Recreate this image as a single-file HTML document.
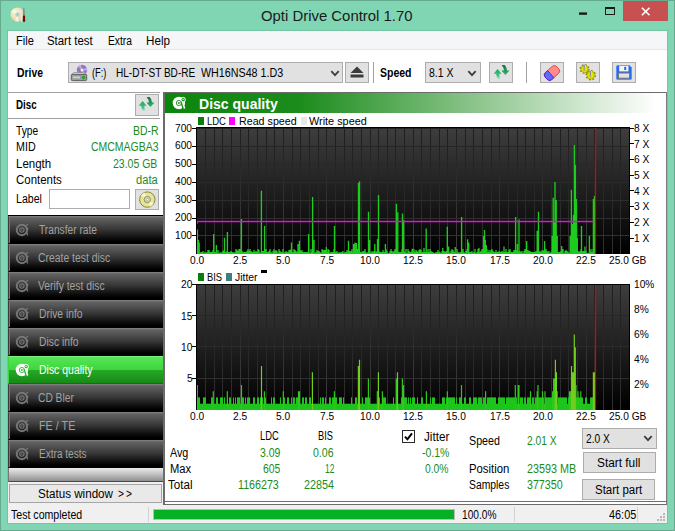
<!DOCTYPE html>
<html><head><meta charset="utf-8"><title>Opti Drive Control 1.70</title>
<style>
html,body{margin:0;padding:0;}
body{width:675px;height:531px;overflow:hidden;background:#80D5B3;position:relative;font-family:"Liberation Sans",sans-serif;font-size:12px;color:#000;}
.abs{position:absolute;}
div{position:absolute;box-sizing:border-box;white-space:nowrap;}
.t{font-family:"Liberation Sans",sans-serif;height:16px;}
.tick{width:4px;height:1px;background:#000;}
.btn{background:#e1e1e1;border:1px solid #adadad;}
.sb{left:8px;width:155px;height:28px;box-shadow:inset 1px 0 0 #777;background:linear-gradient(#6c6c6c 0%,#5e5e5e 8%,#363636 48%,#0e0e0e 80%,#000 94%);border-top:1px solid #7c7c7c;border-left:1px solid #3c3c3c;border-bottom:1px solid #000;}
.sb .ico{position:absolute;left:6px;top:5px;}
.sb.act{box-shadow:none;background:linear-gradient(#56e656 0%,#3ed63e 48%,#25a825 52%,#168a16 100%);border-top:1px solid #7cf07c;border-left:1px solid #3ed63e;border-bottom:1px solid #0f6f0f;}
</style></head><body>
<div style="left:0;top:0;width:675px;height:531px;border:1px solid #66aa8f;"></div>
<div style="left:7px;top:30px;width:661px;height:494px;border:1px solid #73c5a3;"></div>

<div class="t" style="left:261.2px;top:7.6px;font-size:15px;line-height:16px;color:#1a1a1a;transform-origin:0 50%;transform:scaleX(0.9931);">Opti Drive Control 1.70</div>
<svg class="abs" style="left:9px;top:6px" width="20" height="20" viewBox="0 0 20 20"><defs><radialGradient id="dg" cx="0.4" cy="0.35" r="0.75"><stop offset="0" stop-color="#fbf6dc"/><stop offset="0.6" stop-color="#ecdfae"/><stop offset="1" stop-color="#cdbf8c"/></radialGradient></defs><circle cx="8.5" cy="8.6" r="7" fill="url(#dg)"/><path d="M8.5 8.6L2 5.5A7 7 0 0 1 5 2.6zM8.5 8.6L10 15.4A7 7 0 0 1 6 15.2z" fill="#fffbe8" opacity="0.7"/><circle cx="8.5" cy="8.6" r="2.3" fill="#c9cdd2"/><circle cx="8.5" cy="8.6" r="1.1" fill="#80D5B3"/><path d="M10.8 3.2l1.6-.6.9 13-1.4.4z" fill="#ececec" stroke="#c8c8c8" stroke-width="0.3"/><path d="M14.6 2.2l.6 0 .3 7.2h-1.2z" fill="#5a5a5a"/><path d="M14 9.4h2l.2 6-1.2.6-1.2-.6z" fill="#6a0c0c"/></svg>
<svg class="abs" style="left:578px;top:10px" width="10" height="6" viewBox="0 0 10 6"><rect x="1" y="2.4" width="8" height="2.4" fill="#1b1b1b"/></svg>
<div style="left:605px;top:7px;width:10px;height:8px;border:1px solid #1b1b1b;border-top-width:2px;"></div>
<div style="left:623px;top:1px;width:45px;height:20px;background:#c75050;"></div>
<svg class="abs" style="left:640px;top:6px" width="11" height="11" viewBox="0 0 11 11"><path d="M1.9 1.7l7.6 7.6M9.5 1.7l-7.6 7.6" stroke="#fff" stroke-width="1.6"/></svg>
<div style="left:8px;top:31px;width:659px;height:492px;background:#f0f0f0;"></div>
<div style="left:8px;top:31px;width:659px;height:19px;background:#f5f6f7;border-bottom:1px solid #e6e7e8;"></div>
<div style="left:8px;top:50px;width:659px;height:42px;background:#fff;"></div>

<div class="t" style="left:15.5px;top:33.0px;font-size:12px;line-height:16px;color:#000;transform-origin:0 50%;transform:scaleX(0.9213);">File</div>
<div class="t" style="left:47.2px;top:33.0px;font-size:12px;line-height:16px;color:#000;transform-origin:0 50%;transform:scaleX(0.9500);">Start test</div>
<div class="t" style="left:107.5px;top:33.0px;font-size:12px;line-height:16px;color:#000;transform-origin:0 50%;transform:scaleX(0.8547);">Extra</div>
<div class="t" style="left:146.1px;top:33.0px;font-size:12px;line-height:16px;color:#000;transform-origin:0 50%;transform:scaleX(0.9709);">Help</div>
<div class="t" style="left:16.8px;top:65.1px;font-size:12px;line-height:16px;color:#000;transform-origin:0 50%;transform:scaleX(0.8633);font-weight:bold;">Drive</div>
<div class="btn" style="left:68px;top:62px;width:275px;height:21px;"></div>
<svg class="abs" style="left:70px;top:63px" width="19" height="19" viewBox="0 0 19 19"><circle cx="12" cy="7" r="5.2" fill="#9377c2"/><path d="M12 7L8.2 3.6A5.2 5.2 0 0 1 11 1.9zM12 7l3.8 3.4A5.2 5.2 0 0 1 13 12.1zM12 7l4.6-2.2a5.2 5.2 0 0 1 .6 2.6z" fill="#c4b2e2"/><circle cx="12" cy="7" r="1.5" fill="#f2eef8"/><path d="M1.5 11.5l2.5-2h9l3.5 2z" fill="#d4d6d8" stroke="#777" stroke-width="0.6"/><rect x="1.3" y="11.4" width="15.4" height="6.2" rx="1" fill="#9c9fa2" stroke="#5c5f62" stroke-width="1"/><rect x="3" y="13.6" width="7" height="1.6" fill="#d0d2d4"/><circle cx="13.6" cy="14.6" r="1.4" fill="#1fc01f" stroke="#0d7a0d" stroke-width="0.5"/></svg>
<div class="t" style="left:91.5px;top:65.1px;font-size:12px;line-height:16px;color:#000;transform-origin:0 50%;transform:scaleX(0.7742);">(F:)</div>
<div class="t" style="left:115.5px;top:65.1px;font-size:12px;line-height:16px;color:#000;transform-origin:0 50%;transform:scaleX(0.8386);">HL-DT-ST BD-RE</div>
<div class="t" style="left:201.3px;top:65.1px;font-size:12px;line-height:16px;color:#000;transform-origin:0 50%;transform:scaleX(0.8931);">WH16NS48 1.D3</div>
<svg class="abs" style="left:329.7px;top:70px" width="10" height="7" viewBox="0 0 9.4 7"><path d="M1 1.2l3.7 3.9 3.7-3.9" stroke="#404040" stroke-width="1.9" fill="none"/></svg>
<div class="btn" style="left:345px;top:62px;width:24px;height:21px;"></div>
<svg class="abs" style="left:349px;top:65px" width="16" height="15" viewBox="0 0 16 15"><path d="M8 1.5l6.5 6.5H1.5z" fill="#3c3c3c"/><rect x="1.5" y="9.5" width="13" height="3" fill="#3c3c3c"/></svg>
<div style="left:373px;top:62px;width:1px;height:21px;background:#a0a0a0;"></div>
<div class="t" style="left:379.9px;top:65.1px;font-size:12px;line-height:16px;color:#000;transform-origin:0 50%;transform:scaleX(0.8750);font-weight:bold;">Speed</div>
<div class="btn" style="left:425px;top:62px;width:56px;height:21px;"></div>
<div class="t" style="left:429.0px;top:65.1px;font-size:12px;line-height:16px;color:#000;transform-origin:0 50%;transform:scaleX(0.8727);">8.1 X</div>
<svg class="abs" style="left:466.7px;top:69.6px" width="10" height="7" viewBox="0 0 9.4 7"><path d="M1 1.2l3.7 3.9 3.7-3.9" stroke="#404040" stroke-width="1.9" fill="none"/></svg>
<div class="btn" style="left:489px;top:62px;width:24px;height:21px;"></div>
<svg class="abs" style="left:492.5px;top:64px" width="17" height="17" viewBox="0 0 17 17"><defs><linearGradient id="ra" x1="0" y1="0" x2="0" y2="1"><stop offset="0" stop-color="#23a862"/><stop offset="0.6" stop-color="#3cc27c"/><stop offset="1" stop-color="#c8eed8"/></linearGradient><linearGradient id="rb" x1="0" y1="0" x2="0" y2="1"><stop offset="0" stop-color="#176f43"/><stop offset="0.5" stop-color="#1f9358"/><stop offset="1" stop-color="#2fb86c"/></linearGradient></defs><path d="M4.6 5.1L0.6 9.7H3.2Q3.2 13.5 5.2 15.6Q7 15.2 7.2 14.8Q6.2 12.5 6.3 9.7H8.6z" fill="url(#ra)"/><path d="M12.4 11.1L8.4 6.6H10.9Q10.9 3.4 8.6 1.2Q10 0.8 11.6 1Q14 3 14 6.6H16.4z" fill="url(#rb)"/></svg>
<div style="left:526px;top:62px;width:1px;height:21px;background:#a0a0a0;"></div>
<div class="btn" style="left:540px;top:62px;width:24px;height:21px;"></div>
<svg class="abs" style="left:543px;top:64px" width="18" height="18" viewBox="0 0 18 18"><g transform="rotate(-42 9 9)"><rect x="1.2" y="4.3" width="15.6" height="9.4" rx="3.2" fill="#ff8c8c" stroke="#e24040" stroke-width="0.9"/><path d="M4.4 4.3a3.2 3.2 0 0 0 -3.2 3.2v3a3.2 3.2 0 0 0 3.2 3.2h2.9V4.3z" fill="#6868ff" stroke="#2e2ee0" stroke-width="0.9"/></g></svg>
<div class="btn" style="left:576px;top:62px;width:24px;height:21px;"></div>
<svg class="abs" style="left:579px;top:63px" width="18" height="18" viewBox="0 0 18 18"><g><circle cx="5.6" cy="6" r="4.1" fill="none" stroke="#8c8c00" stroke-width="1.8" stroke-dasharray="1.7 1.5"/><circle cx="5.6" cy="6" r="3.6" fill="#e2e200" stroke="#9a9a00" stroke-width="0.6"/><circle cx="11.8" cy="12.2" r="4.4" fill="none" stroke="#8c8c00" stroke-width="1.8" stroke-dasharray="1.8 1.6"/><circle cx="11.8" cy="12.2" r="3.9" fill="#e2e200" stroke="#9a9a00" stroke-width="0.6"/><rect x="4.6" y="1.6" width="2.2" height="5.8" fill="#8a8a8a"/><rect x="5.8" y="1.6" width="0.9" height="5.8" fill="#e8e8e8"/><rect x="10.8" y="8" width="2" height="5.8" fill="#8a8a8a"/><rect x="11.9" y="8" width="0.8" height="5.8" fill="#e8e8e8"/></g></svg>
<div class="btn" style="left:612px;top:62px;width:24px;height:21px;"></div>
<svg class="abs" style="left:616px;top:65px" width="16" height="15" viewBox="0 0 16 15"><path d="M1.5 0.5h12l2 2v11a1 1 0 0 1 -1 1h-13a1 1 0 0 1 -1 -1v-12a1 1 0 0 1 1 -1z" fill="#2a68f0" stroke="#5b93ff" stroke-width="1"/><rect x="3.2" y="0.8" width="9.3" height="5.6" fill="#f4f4f4"/><rect x="8.2" y="1.8" width="2" height="3.2" fill="#2a68f0"/><rect x="2.5" y="8" width="11" height="5.2" fill="#e2e2e2" stroke="#777" stroke-width="1"/></svg>
<div style="left:8px;top:92px;width:155px;height:124px;background:#fff;"></div><div style="left:8px;top:92px;width:152px;height:1px;background:#a0a0a0;"></div>
<div style="left:8px;top:118px;width:152px;height:1px;background:#a0a0a0;"></div>
<div class="btn" style="left:135px;top:94px;width:24px;height:22px;"></div>
<svg class="abs" style="left:138px;top:96px" width="17" height="17" viewBox="0 0 17 17"><defs><linearGradient id="ra" x1="0" y1="0" x2="0" y2="1"><stop offset="0" stop-color="#23a862"/><stop offset="0.6" stop-color="#3cc27c"/><stop offset="1" stop-color="#c8eed8"/></linearGradient><linearGradient id="rb" x1="0" y1="0" x2="0" y2="1"><stop offset="0" stop-color="#176f43"/><stop offset="0.5" stop-color="#1f9358"/><stop offset="1" stop-color="#2fb86c"/></linearGradient></defs><path d="M4.6 5.1L0.6 9.7H3.2Q3.2 13.5 5.2 15.6Q7 15.2 7.2 14.8Q6.2 12.5 6.3 9.7H8.6z" fill="url(#ra)"/><path d="M12.4 11.1L8.4 6.6H10.9Q10.9 3.4 8.6 1.2Q10 0.8 11.6 1Q14 3 14 6.6H16.4z" fill="url(#rb)"/></svg>
<div class="t" style="left:16.4px;top:96.8px;font-size:12px;line-height:16px;color:#000;transform-origin:0 50%;transform:scaleX(0.8136);font-weight:bold;">Disc</div>
<div class="t" style="left:16.4px;top:122.8px;font-size:12px;line-height:16px;color:#000;transform-origin:0 50%;transform:scaleX(0.8487);">Type</div>
<div class="t" style="left:132.7px;top:122.8px;font-size:12px;line-height:16px;color:#1c8a1c;transform-origin:0 50%;transform:scaleX(0.8709);">BD-R</div>
<div class="t" style="left:16.4px;top:138.8px;font-size:12px;line-height:16px;color:#000;transform-origin:0 50%;transform:scaleX(0.8925);">MID</div>
<div class="t" style="left:90.7px;top:138.8px;font-size:12px;line-height:16px;color:#1c8a1c;transform-origin:0 50%;transform:scaleX(0.8721);">CMCMAGBA3</div>
<div class="t" style="left:16.4px;top:155.8px;font-size:12px;line-height:16px;color:#000;transform-origin:0 50%;transform:scaleX(0.9586);">Length</div>
<div class="t" style="left:113.4px;top:155.8px;font-size:12px;line-height:16px;color:#1c8a1c;transform-origin:0 50%;transform:scaleX(0.8748);">23.05 GB</div>
<div class="t" style="left:16.4px;top:171.8px;font-size:12px;line-height:16px;color:#000;transform-origin:0 50%;transform:scaleX(0.9542);">Contents</div>
<div class="t" style="left:136.0px;top:171.8px;font-size:12px;line-height:16px;color:#1c8a1c;transform-origin:0 50%;transform:scaleX(0.9274);">data</div>
<div class="t" style="left:16.4px;top:190.8px;font-size:12px;line-height:16px;color:#000;transform-origin:0 50%;transform:scaleX(0.8810);">Label</div>
<div style="left:49px;top:189px;width:81px;height:20px;background:#fff;border:1px solid #abadb3;"></div>
<div class="btn" style="left:135px;top:189px;width:24px;height:21px;"></div>
<svg class="abs" style="left:138.5px;top:191px" width="17" height="17" viewBox="0 0 17 17"><circle cx="8.3" cy="8.6" r="7.7" fill="#e6e68c" stroke="#77773c" stroke-width="0.9"/><path d="M8.3 8.6L2 4.6A7.7 7.7 0 0 1 5.5 1.6zM8.3 8.6l6.3 4A7.7 7.7 0 0 1 11 15.7z" fill="#f6f6c8"/><circle cx="8.3" cy="8.6" r="3.2" fill="#d8d8b0" stroke="#8a8a6a" stroke-width="0.9"/><circle cx="8.3" cy="8.6" r="1.3" fill="#f4f4f4" stroke="#8a8a6a" stroke-width="0.5"/></svg>
<div style="left:8px;top:215px;width:156px;height:267px;background:#000;"></div>
<div class="sb" style="top:216px"><svg class="ico" width="16" height="16" viewBox="0 0 16 16"><circle cx="6.9" cy="8" r="5.2" fill="none" stroke="#787878" stroke-width="1.9"/><circle cx="6.9" cy="8" r="2.2" fill="none" stroke="#787878" stroke-width="1.1"/><circle cx="6.9" cy="8" r="0.7" fill="#787878"/><path d="M10 4.5l3-2.3M10.8 7l2.6-.6M11.8 9.5l.8 4" stroke="#787878" stroke-width="1.2" fill="none"/></svg></div>
<div class="t" style="left:39.0px;top:221.8px;font-size:12px;line-height:16px;color:#a2a2a2;transform-origin:0 50%;transform:scaleX(0.8494);">Transfer rate</div>
<div class="sb" style="top:244px"><svg class="ico" width="16" height="16" viewBox="0 0 16 16"><circle cx="6.9" cy="8" r="5.2" fill="none" stroke="#787878" stroke-width="1.9"/><circle cx="6.9" cy="8" r="2.2" fill="none" stroke="#787878" stroke-width="1.1"/><circle cx="6.9" cy="8" r="0.7" fill="#787878"/><path d="M10 4.5l3-2.3M10.8 7l2.6-.6M11.8 9.5l.8 4" stroke="#787878" stroke-width="1.2" fill="none"/></svg></div>
<div class="t" style="left:37.8px;top:249.8px;font-size:12px;line-height:16px;color:#a2a2a2;transform-origin:0 50%;transform:scaleX(0.8657);">Create test disc</div>
<div class="sb" style="top:272px"><svg class="ico" width="16" height="16" viewBox="0 0 16 16"><circle cx="6.9" cy="8" r="5.2" fill="none" stroke="#787878" stroke-width="1.9"/><circle cx="6.9" cy="8" r="2.2" fill="none" stroke="#787878" stroke-width="1.1"/><circle cx="6.9" cy="8" r="0.7" fill="#787878"/><path d="M10 4.5l3-2.3M10.8 7l2.6-.6M11.8 9.5l.8 4" stroke="#787878" stroke-width="1.2" fill="none"/></svg></div>
<div class="t" style="left:38.3px;top:277.8px;font-size:12px;line-height:16px;color:#a2a2a2;transform-origin:0 50%;transform:scaleX(0.8618);">Verify test disc</div>
<div class="sb" style="top:300px"><svg class="ico" width="16" height="16" viewBox="0 0 16 16"><circle cx="6.9" cy="8" r="5.2" fill="none" stroke="#787878" stroke-width="1.9"/><circle cx="6.9" cy="8" r="2.2" fill="none" stroke="#787878" stroke-width="1.1"/><circle cx="6.9" cy="8" r="0.7" fill="#787878"/><path d="M10 4.5l3-2.3M10.8 7l2.6-.6M11.8 9.5l.8 4" stroke="#787878" stroke-width="1.2" fill="none"/></svg></div>
<div class="t" style="left:38.5px;top:305.8px;font-size:12px;line-height:16px;color:#a2a2a2;transform-origin:0 50%;transform:scaleX(0.8590);">Drive info</div>
<div class="sb" style="top:328px"><svg class="ico" width="16" height="16" viewBox="0 0 16 16"><circle cx="6.9" cy="8" r="5.2" fill="none" stroke="#787878" stroke-width="1.9"/><circle cx="6.9" cy="8" r="2.2" fill="none" stroke="#787878" stroke-width="1.1"/><circle cx="6.9" cy="8" r="0.7" fill="#787878"/><path d="M10 4.5l3-2.3M10.8 7l2.6-.6M11.8 9.5l.8 4" stroke="#787878" stroke-width="1.2" fill="none"/></svg></div>
<div class="t" style="left:38.5px;top:333.8px;font-size:12px;line-height:16px;color:#a2a2a2;transform-origin:0 50%;transform:scaleX(0.8594);">Disc info</div>
<div class="sb act" style="top:356px"><svg class="ico" width="16" height="16" viewBox="0 0 16 16"><circle cx="6.9" cy="8" r="6.2" fill="#fff"/><circle cx="6.9" cy="8" r="2.6" fill="none" stroke="#2db82d" stroke-width="0.9"/><circle cx="6.9" cy="8" r="0.9" fill="#2db82d"/><path d="M9.6 6.4l2.3 8" stroke="#2db82d" stroke-width="2.6"/><circle cx="11.2" cy="4.6" r="2.2" fill="#2db82d" stroke="#fff" stroke-width="1"/><path d="M10.4 6.6l2.2 6.9" stroke="#fff" stroke-width="1.5"/><path d="M10.3 4.9l.7-1 .5 1 .6-1" stroke="#fff" stroke-width="0.6" fill="none"/></svg></div>
<div class="t" style="left:38.5px;top:361.8px;font-size:12px;line-height:16px;color:#fff;transform-origin:0 50%;transform:scaleX(0.8725);">Disc quality</div>
<div class="sb" style="top:384px"><svg class="ico" width="16" height="16" viewBox="0 0 16 16"><circle cx="6.9" cy="8" r="5.2" fill="none" stroke="#787878" stroke-width="1.9"/><circle cx="6.9" cy="8" r="2.2" fill="none" stroke="#787878" stroke-width="1.1"/><circle cx="6.9" cy="8" r="0.7" fill="#787878"/><path d="M10 4.5l3-2.3M10.8 7l2.6-.6M11.8 9.5l.8 4" stroke="#787878" stroke-width="1.2" fill="none"/></svg></div>
<div class="t" style="left:37.6px;top:389.8px;font-size:12px;line-height:16px;color:#a2a2a2;transform-origin:0 50%;transform:scaleX(0.8524);">CD Bler</div>
<div class="sb" style="top:412px"><svg class="ico" width="16" height="16" viewBox="0 0 16 16"><circle cx="6.9" cy="8" r="5.2" fill="none" stroke="#787878" stroke-width="1.9"/><circle cx="6.9" cy="8" r="2.2" fill="none" stroke="#787878" stroke-width="1.1"/><circle cx="6.9" cy="8" r="0.7" fill="#787878"/><path d="M10 4.5l3-2.3M10.8 7l2.6-.6M11.8 9.5l.8 4" stroke="#787878" stroke-width="1.2" fill="none"/></svg></div>
<div class="t" style="left:38.5px;top:417.8px;font-size:12px;line-height:16px;color:#a2a2a2;transform-origin:0 50%;transform:scaleX(0.8976);">FE / TE</div>
<div class="sb" style="top:440px"><svg class="ico" width="16" height="16" viewBox="0 0 16 16"><circle cx="6.9" cy="8" r="5.2" fill="none" stroke="#787878" stroke-width="1.9"/><circle cx="6.9" cy="8" r="2.2" fill="none" stroke="#787878" stroke-width="1.1"/><circle cx="6.9" cy="8" r="0.7" fill="#787878"/><path d="M10 4.5l3-2.3M10.8 7l2.6-.6M11.8 9.5l.8 4" stroke="#787878" stroke-width="1.2" fill="none"/></svg></div>
<div class="t" style="left:38.5px;top:445.8px;font-size:12px;line-height:16px;color:#a2a2a2;transform-origin:0 50%;transform:scaleX(0.8386);">Extra tests</div>
<div style="left:8px;top:468px;width:155px;height:14px;background:linear-gradient(#ececec,#909090);border-bottom:1px solid #4a4a4a;border-left:1px solid #777;"></div>
<div class="btn" style="left:9px;top:484px;width:153px;height:19px;background:#e9e9e9;border-color:#a6a6a6;"></div>
<div class="t" style="left:37.6px;top:486.3px;font-size:12px;line-height:16px;color:#000;transform-origin:0 50%;transform:scaleX(0.9688);">Status window</div>
<div class="t" style="left:118.2px;top:486.3px;font-size:12px;line-height:16px;color:#000;transform-origin:0 50%;transform:scaleX(0.8477);">&gt;</div>
<div class="t" style="left:125.8px;top:486.3px;font-size:12px;line-height:16px;color:#000;transform-origin:0 50%;transform:scaleX(0.8477);">&gt;</div>
<div style="left:163px;top:92px;width:504px;height:413px;background:#fff;border:1px solid #6c6c6c;border-left-width:2px;border-right-color:#7c7c7c;"></div>
<div style="left:163px;top:501px;width:504px;height:1px;background:#6c6c6c;"></div>
<div style="left:165px;top:93px;width:501px;height:20px;background:linear-gradient(90deg,#0c850c 0px,#1c8c1c 135px,#fff 492px);"></div>
<div style="left:172px;top:95px;width:16px;height:16px;"><svg class="ico" width="16" height="16" viewBox="0 0 16 16"><circle cx="6.9" cy="8" r="6.2" fill="#fff"/><circle cx="6.9" cy="8" r="2.6" fill="none" stroke="#1b8b1b" stroke-width="0.9"/><circle cx="6.9" cy="8" r="0.9" fill="#1b8b1b"/><path d="M9.6 6.4l2.3 8" stroke="#1b8b1b" stroke-width="2.6"/><circle cx="11.2" cy="4.6" r="2.2" fill="#1b8b1b" stroke="#fff" stroke-width="1"/><path d="M10.4 6.6l2.2 6.9" stroke="#fff" stroke-width="1.5"/><path d="M10.3 4.9l.7-1 .5 1 .6-1" stroke="#fff" stroke-width="0.6" fill="none"/></svg></div>
<div class="t" style="left:198.7px;top:95.6px;font-size:14px;line-height:16px;color:#fff;transform-origin:0 50%;transform:scaleX(1.0015);font-weight:bold;">Disc quality</div>
<div style="left:198px;top:117px;width:6px;height:8px;background:#0a7d0a;"></div>
<div class="t" style="left:207.4px;top:113.0px;font-size:10.67px;line-height:16px;color:#000;transform-origin:0 50%;transform:scaleX(0.8857);">LDC</div>
<div style="left:229px;top:117px;width:6px;height:8px;background:#ff00ff;"></div>
<div class="t" style="left:239.0px;top:113.0px;font-size:10.67px;line-height:16px;color:#000;transform-origin:0 50%;transform:scaleX(1.0033);">Read speed</div>
<div style="left:300.5px;top:117px;width:6px;height:8px;background:#e8e8e8;"></div>
<div class="t" style="left:309.0px;top:113.0px;font-size:10.67px;line-height:16px;color:#000;transform-origin:0 50%;transform:scaleX(1.0200);">Write speed</div>
<div style="left:198px;top:273px;width:6px;height:8px;background:#0a7d0a;"></div>
<div class="t" style="left:207.4px;top:268.9px;font-size:10.67px;line-height:16px;color:#000;transform-origin:0 50%;transform:scaleX(0.8790);">BIS</div>
<div style="left:226px;top:273px;width:6px;height:8px;background:#3d7f7f;"></div>
<div class="t" style="left:235.0px;top:268.9px;font-size:10.67px;line-height:16px;color:#000;transform-origin:0 50%;transform:scaleX(0.9761);">Jitter</div>
<div style="left:261px;top:270px;width:6px;height:3px;background:#000;"></div>
<svg class="abs" style="left:196px;top:127px" width="434" height="127" viewBox="0 0 434 127">
<defs><linearGradient id="cg" x1="0" y1="0" x2="0" y2="1"><stop offset="0" stop-color="#3e3e3e"/><stop offset="1" stop-color="#000"/></linearGradient><linearGradient id="lg" gradientUnits="userSpaceOnUse" x1="0" y1="0" x2="0" y2="127"><stop offset="0" stop-color="#1e1e1e"/><stop offset="1" stop-color="#303030"/></linearGradient><linearGradient id="lgm" gradientUnits="userSpaceOnUse" x1="0" y1="0" x2="0" y2="127"><stop offset="0" stop-color="#1e1e1e"/><stop offset="1" stop-color="#404040"/></linearGradient></defs>
<rect width="434" height="127" fill="url(#cg)"/>
<path d="M9.5 0V127 M18.5 0V127 M26.5 0V127 M35.5 0V127 M52.5 0V127 M61.5 0V127 M70.5 0V127 M78.5 0V127 M96.5 0V127 M104.5 0V127 M113.5 0V127 M122.5 0V127 M139.5 0V127 M148.5 0V127 M156.5 0V127 M165.5 0V127 M182.5 0V127 M191.5 0V127 M199.5 0V127 M208.5 0V127 M225.5 0V127 M234.5 0V127 M243.5 0V127 M251.5 0V127 M269.5 0V127 M277.5 0V127 M286.5 0V127 M295.5 0V127 M312.5 0V127 M321.5 0V127 M329.5 0V127 M338.5 0V127 M355.5 0V127 M364.5 0V127 M372.5 0V127 M381.5 0V127 M398.5 0V127 M407.5 0V127 M416.5 0V127 M424.5 0V127" stroke="url(#lg)" stroke-width="1" fill="none"/><path d="M44.5 0V127 M87.5 0V127 M130.5 0V127 M174.5 0V127 M217.5 0V127 M260.5 0V127 M303.5 0V127 M346.5 0V127 M390.5 0V127" stroke="url(#lgm)" stroke-width="1" fill="none"/><path d="M0 108.5H434" stroke="#313131" stroke-width="1"/><path d="M0 91.5H434" stroke="#2f2f2f" stroke-width="1"/><path d="M0 73.5H434" stroke="#2d2d2d" stroke-width="1"/><path d="M0 55.5H434" stroke="#2a2a2a" stroke-width="1"/><path d="M0 37.5H434" stroke="#282828" stroke-width="1"/><path d="M0 19.5H434" stroke="#262626" stroke-width="1"/><path d="M0 1.5H434" stroke="#242424" stroke-width="1"/>
<path d="M1.0 127V124.0 M2.0 127V125.0 M3.0 127V123.0 M4.0 127V126.0 M5.0 127V125.0 M6.0 127V125.0 M7.0 127V124.0 M8.0 127V126.0 M9.0 127V125.0 M10.0 127V126.0 M11.0 127V125.0 M12.0 127V123.0 M13.0 127V123.0 M14.0 127V125.0 M15.0 127V125.0 M16.0 127V125.0 M17.0 127V123.0 M18.0 127V126.0 M19.0 127V125.0 M20.0 127V125.0 M21.0 127V126.0 M22.0 127V123.0 M23.0 127V126.0 M24.0 127V125.0 M25.0 127V126.0 M26.0 127V125.0 M27.0 127V124.0 M28.0 127V123.0 M29.0 127V125.0 M30.0 127V125.0 M31.0 127V124.0 M32.0 127V125.0 M33.0 127V125.0 M34.0 127V125.0 M35.0 127V124.0 M36.0 127V125.0 M37.0 127V125.0 M38.0 127V126.0 M39.0 127V125.0 M40.0 127V122.0 M41.0 127V123.0 M42.0 127V124.0 M43.0 127V122.0 M44.0 127V122.0 M45.0 127V124.0 M46.0 127V124.0 M47.0 127V125.0 M48.0 127V125.0 M49.0 127V125.0 M50.0 127V125.0 M51.0 127V124.0 M52.0 127V122.0 M53.0 127V124.0 M54.0 127V122.0 M55.0 127V124.0 M56.0 127V125.0 M57.0 127V125.0 M58.0 127V123.0 M59.0 127V125.0 M60.0 127V124.0 M61.0 127V125.0 M62.0 127V122.0 M63.0 127V123.0 M64.0 127V126.0 M65.0 127V125.0 M66.0 127V124.0 M67.0 127V124.0 M68.0 127V124.0 M69.0 127V122.0 M70.0 127V122.0 M71.0 127V125.0 M72.0 127V125.0 M73.0 127V124.0 M74.0 127V122.0 M75.0 127V125.0 M76.0 127V126.0 M77.0 127V124.0 M78.0 127V122.0 M79.0 127V124.0 M80.0 127V123.0 M81.0 127V124.0 M82.0 127V126.0 M83.0 127V122.0 M84.0 127V124.0 M85.0 127V125.0 M86.0 127V125.0 M87.0 127V122.0 M88.0 127V126.0 M89.0 127V125.0 M90.0 127V124.0 M91.0 127V125.0 M92.0 127V125.0 M93.0 127V123.0 M94.0 127V123.0 M95.0 127V122.0 M96.0 127V125.0 M97.0 127V125.0 M98.0 127V122.0 M99.0 127V123.0 M100.0 127V124.0 M101.0 127V125.0 M102.0 127V123.0 M103.0 127V124.0 M104.0 127V123.0 M105.0 127V124.0 M106.0 127V123.0 M107.0 127V125.0 M108.0 127V125.0 M109.0 127V125.0 M110.0 127V125.0 M111.0 127V125.0 M112.0 127V125.0 M113.0 127V125.0 M114.0 127V126.0 M115.0 127V122.0 M116.0 127V125.0 M117.0 127V124.0 M118.0 127V124.0 M119.0 127V126.0 M120.0 127V125.0 M121.0 127V123.0 M122.0 127V124.0 M123.0 127V124.0 M124.0 127V125.0 M125.0 127V126.0 M126.0 127V122.0 M127.0 127V123.0 M128.0 127V123.0 M129.0 127V123.0 M130.0 127V123.0 M131.0 127V125.0 M132.0 127V122.0 M133.0 127V123.0 M134.0 127V126.0 M135.0 127V125.0 M136.0 127V125.0 M137.0 127V125.0 M138.0 127V122.0 M139.0 127V125.0 M140.0 127V125.0 M141.0 127V124.0 M142.0 127V126.0 M143.0 127V125.0 M144.0 127V126.0 M145.0 127V125.0 M146.0 127V125.0 M147.0 127V124.0 M148.0 127V126.0 M149.0 127V125.0 M150.0 127V125.0 M151.0 127V123.0 M152.0 127V125.0 M153.0 127V124.0 M154.0 127V124.0 M155.0 127V124.0 M156.0 127V122.0 M157.0 127V125.0 M158.0 127V125.0 M159.0 127V122.0 M160.0 127V122.0 M161.0 127V122.0 M162.0 127V122.0 M163.0 127V124.0 M164.0 127V125.0 M165.0 127V125.0 M166.0 127V125.0 M167.0 127V124.0 M168.0 127V124.0 M169.0 127V122.0 M170.0 127V125.0 M171.0 127V126.0 M172.0 127V125.0 M173.0 127V124.0 M174.0 127V125.0 M175.0 127V126.0 M176.0 127V124.0 M177.0 127V125.0 M178.0 127V124.0 M179.0 127V124.0 M180.0 127V125.0 M181.0 127V124.0 M182.0 127V125.0 M183.0 127V124.0 M184.0 127V125.0 M185.0 127V125.0 M186.0 127V125.0 M187.0 127V123.0 M188.0 127V125.0 M189.0 127V125.0 M190.0 127V122.0 M191.0 127V124.0 M192.0 127V126.0 M193.0 127V126.0 M194.0 127V124.0 M195.0 127V122.0 M196.0 127V124.0 M197.0 127V125.0 M198.0 127V124.0 M199.0 127V122.0 M200.0 127V124.0 M201.0 127V124.0 M202.0 127V125.0 M203.0 127V125.0 M204.0 127V125.0 M205.0 127V125.0 M206.0 127V122.0 M207.0 127V125.0 M208.0 127V124.0 M209.0 127V125.0 M210.0 127V122.0 M211.0 127V126.0 M212.0 127V122.0 M213.0 127V124.0 M214.0 127V125.0 M215.0 127V125.0 M216.0 127V123.0 M217.0 127V125.0 M218.0 127V122.0 M219.0 127V125.0 M220.0 127V123.0 M221.0 127V124.0 M222.0 127V125.0 M223.0 127V123.0 M224.0 127V122.0 M225.0 127V123.0 M226.0 127V125.0 M227.0 127V125.0 M228.0 127V125.0 M229.0 127V125.0 M230.0 127V126.0 M231.0 127V125.0 M232.0 127V122.0 M233.0 127V125.0 M234.0 127V122.0 M235.0 127V124.0 M236.0 127V125.0 M237.0 127V125.0 M238.0 127V126.0 M239.0 127V126.0 M240.0 127V125.0 M241.0 127V125.0 M242.0 127V123.0 M243.0 127V125.0 M244.0 127V125.0 M245.0 127V126.0 M246.0 127V124.0 M247.0 127V125.0 M248.0 127V124.0 M249.0 127V125.0 M250.0 127V124.0 M251.0 127V124.0 M252.0 127V123.0 M253.0 127V125.0 M254.0 127V126.0 M255.0 127V124.0 M256.0 127V122.0 M257.0 127V123.0 M258.0 127V125.0 M259.0 127V125.0 M260.0 127V126.0 M261.0 127V122.0 M262.0 127V125.0 M263.0 127V126.0 M264.0 127V125.0 M265.0 127V125.0 M266.0 127V125.0 M267.0 127V122.0 M268.0 127V125.0 M269.0 127V126.0 M270.0 127V124.0 M271.0 127V122.0 M272.0 127V125.0 M273.0 127V126.0 M274.0 127V125.0 M275.0 127V125.0 M276.0 127V124.0 M277.0 127V126.0 M278.0 127V125.0 M279.0 127V122.0 M280.0 127V126.0 M281.0 127V125.0 M282.0 127V122.0 M283.0 127V124.0 M284.0 127V125.0 M285.0 127V124.0 M286.0 127V122.0 M287.0 127V122.0 M288.0 127V125.0 M289.0 127V124.0 M290.0 127V125.0 M291.0 127V122.0 M292.0 127V125.0 M293.0 127V123.0 M294.0 127V125.0 M295.0 127V123.0 M296.0 127V122.0 M297.0 127V124.0 M298.0 127V125.0 M299.0 127V125.0 M300.0 127V123.0 M301.0 127V125.0 M302.0 127V125.0 M303.0 127V124.0 M304.0 127V125.0 M305.0 127V125.0 M306.0 127V124.0 M307.0 127V125.0 M308.0 127V124.0 M309.0 127V125.0 M310.0 127V122.0 M311.0 127V125.0 M312.0 127V125.0 M313.0 127V123.0 M314.0 127V122.0 M315.0 127V125.0 M316.0 127V125.0 M317.0 127V125.0 M318.0 127V123.0 M319.0 127V123.0 M320.0 127V124.0 M321.0 127V123.0 M322.0 127V125.0 M323.0 127V124.0 M324.0 127V124.0 M325.0 127V125.0 M326.0 127V124.0 M327.0 127V126.0 M328.0 127V124.0 M329.0 127V122.0 M330.0 127V122.0 M331.0 127V126.0 M332.0 127V123.0 M333.0 127V124.0 M334.0 127V124.0 M335.0 127V125.0 M336.0 127V125.0 M337.0 127V125.0 M338.0 127V125.0 M339.0 127V125.0 M340.0 127V124.0 M341.0 127V124.0 M342.0 127V126.0 M343.0 127V125.0 M344.0 127V124.0 M345.0 127V125.0 M346.0 127V123.0 M347.0 127V124.0 M348.0 127V123.0 M349.0 127V125.0 M350.0 127V122.0 M351.0 127V124.0 M352.0 127V125.0 M353.0 127V124.0 M354.0 127V126.0 M355.0 127V125.0 M356.0 127V123.0 M357.0 127V125.0 M358.0 127V124.0 M359.0 127V126.0 M360.0 127V125.0 M361.0 127V124.0 M362.0 127V125.0 M363.0 127V125.0 M364.0 127V125.0 M365.0 127V124.0 M366.0 127V125.0 M367.0 127V122.0 M368.0 127V126.0 M369.0 127V124.0 M370.0 127V123.0 M371.0 127V124.0 M372.0 127V125.0 M373.0 127V126.0 M374.0 127V125.0 M375.0 127V125.0 M376.0 127V125.0 M377.0 127V124.0 M378.0 127V126.0 M379.0 127V125.0 M380.0 127V125.0 M381.0 127V124.0 M382.0 127V124.0 M383.0 127V125.0 M384.0 127V124.0 M385.0 127V122.0 M386.0 127V125.0 M387.0 127V124.0 M388.0 127V124.0 M389.0 127V126.0 M390.0 127V124.0 M391.0 127V126.0 M392.0 127V126.0 M393.0 127V126.0 M394.0 127V125.0 M395.0 127V122.0 M396.0 127V125.0 M397.0 127V122.0 M398.0 127V125.0 M1.4 127V102.4 M2.4 127V113.0 M3.2 127V115.6 M17.7 127V106.9 M20.4 127V118.0 M28.5 127V110.8 M31.4 127V105.0 M45.4 127V91.9 M65.4 127V63.7 M68.6 127V99.0 M95.5 127V115.6 M102.0 127V117.0 M103.4 127V113.7 M112.6 127V106.9 M116.6 127V70.0 M118.0 127V113.0 M130.3 127V120.0 M138.5 127V99.0 M152.5 127V113.7 M157.7 127V117.0 M159.0 127V115.6 M160.4 127V116.0 M162.5 127V56.0 M163.5 127V54.2 M172.5 127V84.7 M173.5 127V113.0 M178.8 127V117.0 M181.5 127V112.0 M182.5 127V68.1 M189.4 127V117.0 M200.4 127V76.8 M201.8 127V85.3 M206.5 127V86.6 M207.6 127V93.0 M216.3 127V121.7 M228.0 127V121.0 M230.2 127V101.6 M246.8 127V121.0 M251.3 127V99.8 M252.6 127V119.5 M259.2 127V120.0 M265.6 127V90.0 M271.6 127V112.2 M272.7 127V115.6 M283.0 127V121.0 M287.7 127V109.0 M288.5 127V103.0 M289.3 127V113.0 M290.3 127V118.0 M308.0 127V119.5 M319.6 127V90.0 M321.4 127V117.0 M323.0 127V92.6 M330.7 127V114.0 M341.2 127V103.7 M342.5 127V84.7 M348.6 127V114.0 M356.2 127V109.0 M357.2 127V70.8 M358.1 127V95.0 M359.0 127V55.0 M360.2 127V73.0 M361.2 127V109.0 M365.7 127V119.0 M374.2 127V109.0 M375.4 127V62.8 M376.6 127V97.0 M377.5 127V88.0 M378.4 127V18.0 M379.4 127V37.8 M380.3 127V72.0 M381.3 127V111.0 M385.5 127V99.0 M389.0 127V119.5 M393.4 127V109.0 M397.4 127V72.0 M398.4 127V69.0" stroke="#1dcc1d" stroke-width="1.35" fill="none"/>
<path d="M1 97V94.5H398" stroke="#e010e0" stroke-width="1.4" fill="none"/>
<path d="M399.5 0V127" stroke="#e40000" stroke-width="1.25"/>
<path d="M0.5 127V0.5H433.5V127" stroke="#000" stroke-width="1" fill="none"/>
</svg>
<svg class="abs" style="left:196px;top:284px" width="434" height="126" viewBox="0 0 434 126">
<rect width="434" height="126" fill="url(#cg)"/>
<path d="M9.5 0V126 M18.5 0V126 M26.5 0V126 M35.5 0V126 M52.5 0V126 M61.5 0V126 M70.5 0V126 M78.5 0V126 M96.5 0V126 M104.5 0V126 M113.5 0V126 M122.5 0V126 M139.5 0V126 M148.5 0V126 M156.5 0V126 M165.5 0V126 M182.5 0V126 M191.5 0V126 M199.5 0V126 M208.5 0V126 M225.5 0V126 M234.5 0V126 M243.5 0V126 M251.5 0V126 M269.5 0V126 M277.5 0V126 M286.5 0V126 M295.5 0V126 M312.5 0V126 M321.5 0V126 M329.5 0V126 M338.5 0V126 M355.5 0V126 M364.5 0V126 M372.5 0V126 M381.5 0V126 M398.5 0V126 M407.5 0V126 M416.5 0V126 M424.5 0V126" stroke="url(#lg)" stroke-width="1" fill="none"/><path d="M44.5 0V126 M87.5 0V126 M130.5 0V126 M174.5 0V126 M217.5 0V126 M260.5 0V126 M303.5 0V126 M346.5 0V126 M390.5 0V126" stroke="url(#lgm)" stroke-width="1" fill="none"/><path d="M0 94.5H434" stroke="#2f2f2f" stroke-width="1"/><path d="M0 62.5H434" stroke="#2b2b2b" stroke-width="1"/><path d="M0 31.5H434" stroke="#272727" stroke-width="1"/>
<rect x="1" y="119.7" width="398" height="6.3" fill="#1cc41c"/>
<g fill="#1cc41c"><rect x="1" y="113.4" width="3" height="6.8"/><rect x="7" y="113.4" width="3" height="6.8"/><rect x="15" y="113.4" width="2" height="6.8"/><rect x="20" y="113.4" width="2" height="6.8"/><rect x="24" y="113.4" width="3" height="6.8"/><rect x="28" y="113.4" width="1" height="6.8"/><rect x="31" y="113.4" width="1" height="6.8"/><rect x="33" y="113.4" width="2" height="6.8"/><rect x="37" y="113.4" width="1" height="6.8"/><rect x="39" y="113.4" width="1" height="6.8"/><rect x="41" y="113.4" width="3" height="6.8"/><rect x="46" y="113.4" width="2" height="6.8"/><rect x="49" y="113.4" width="1" height="6.8"/><rect x="51" y="113.4" width="3" height="6.8"/><rect x="57" y="113.4" width="2" height="6.8"/><rect x="61" y="113.4" width="2" height="6.8"/><rect x="64" y="113.4" width="3" height="6.8"/><rect x="69" y="113.4" width="1" height="6.8"/><rect x="75" y="113.4" width="1" height="6.8"/><rect x="77" y="113.4" width="2" height="6.8"/><rect x="84" y="113.4" width="1" height="6.8"/><rect x="87" y="113.4" width="2" height="6.8"/><rect x="91" y="113.4" width="2" height="6.8"/><rect x="95" y="113.4" width="1" height="6.8"/><rect x="97" y="113.4" width="2" height="6.8"/><rect x="100" y="113.4" width="2" height="6.8"/><rect x="103" y="113.4" width="1" height="6.8"/><rect x="106" y="113.4" width="2" height="6.8"/><rect x="109" y="113.4" width="2" height="6.8"/><rect x="113" y="113.4" width="2" height="6.8"/><rect x="116" y="113.4" width="1" height="6.8"/><rect x="124" y="113.4" width="1" height="6.8"/><rect x="126" y="113.4" width="2" height="6.8"/><rect x="129" y="113.4" width="1" height="6.8"/><rect x="133" y="113.4" width="2" height="6.8"/><rect x="136" y="113.4" width="2" height="6.8"/><rect x="139" y="113.4" width="2" height="6.8"/><rect x="143" y="113.4" width="3" height="6.8"/><rect x="147" y="113.4" width="1" height="6.8"/><rect x="155" y="113.4" width="1" height="6.8"/><rect x="159" y="113.4" width="2" height="6.8"/><rect x="166" y="113.4" width="1" height="6.8"/><rect x="169" y="113.4" width="3" height="6.8"/><rect x="173" y="113.4" width="1" height="6.8"/><rect x="181" y="113.4" width="3" height="6.8"/><rect x="187" y="113.4" width="3" height="6.8"/><rect x="197" y="113.4" width="1" height="6.8"/><rect x="205" y="113.4" width="2" height="6.8"/><rect x="208" y="113.4" width="3" height="6.8"/><rect x="212" y="113.4" width="1" height="6.8"/><rect x="214" y="113.4" width="1" height="6.8"/><rect x="216" y="113.4" width="3" height="6.8"/><rect x="221" y="113.4" width="1" height="6.8"/><rect x="225" y="113.4" width="2" height="6.8"/><rect x="234" y="113.4" width="1" height="6.8"/><rect x="236" y="113.4" width="3" height="6.8"/><rect x="246" y="113.4" width="3" height="6.8"/><rect x="250" y="113.4" width="9" height="6.8"/><rect x="260" y="113.4" width="1" height="6.8"/><rect x="263" y="113.4" width="2" height="6.8"/><rect x="268" y="113.4" width="2" height="6.8"/><rect x="273" y="113.4" width="2" height="6.8"/><rect x="277" y="113.4" width="4" height="6.8"/><rect x="282" y="113.4" width="4" height="6.8"/><rect x="287" y="113.4" width="3" height="6.8"/><rect x="291" y="113.4" width="9" height="6.8"/><rect x="302" y="113.4" width="7" height="6.8"/><rect x="310" y="113.4" width="9" height="6.8"/><rect x="320" y="113.4" width="1" height="6.8"/><rect x="324" y="113.4" width="3" height="6.8"/><rect x="328" y="113.4" width="2" height="6.8"/><rect x="331" y="113.4" width="4" height="6.8"/><rect x="336" y="113.4" width="2" height="6.8"/><rect x="339" y="113.4" width="9" height="6.8"/><rect x="349" y="113.4" width="9" height="6.8"/><rect x="359" y="113.4" width="2" height="6.8"/><rect x="362" y="113.4" width="9" height="6.8"/><rect x="372" y="113.4" width="4" height="6.8"/><rect x="378" y="113.4" width="9" height="6.8"/><rect x="389" y="113.4" width="2" height="6.8"/><rect x="394" y="113.4" width="3" height="6.8"/><rect x="398" y="113.4" width="1" height="6.8"/></g>
<path d="M1.3 126V100.9 M17.3 126V107.2 M31.3 126V107.2 M45.5 126V100.9 M68.4 126V107.2 M87.3 126V107.2 M102.5 126V107.2 M103.5 126V107.2 M138.4 126V107.2 M172.4 126V94.6 M181.3 126V107.2 M186.4 126V107.2 M200.4 126V94.6 M206.4 126V94.6 M207.5 126V100.9 M230.4 126V107.2 M251.3 126V107.2 M265.5 126V100.9 M289.6 126V107.2 M319.3 126V100.9 M322.2 126V100.9 M323.0 126V100.9 M334.5 126V107.2 M341.2 126V107.2 M342.0 126V100.9 M346.5 126V107.2 M349.0 126V107.2 M356.6 126V107.2 M357.6 126V94.6 M358.5 126V94.6 M361.2 126V107.2 M373.5 126V107.2 M374.5 126V107.2 M380.0 126V100.9 M382.0 126V107.2 M384.8 126V107.2" stroke="#30c81c" stroke-width="1.2" fill="none"/>
<path d="M65.5 126V82.0 M116.4 126V88.3 M162.4 126V82.0 M163.5 126V75.8 M182.4 126V88.3 M201.5 126V88.3 M359.4 126V75.8 M360.4 126V88.3 M375.5 126V82.0 M376.5 126V88.3 M377.4 126V88.3 M378.3 126V50.6 M379.3 126V63.2 M397.4 126V88.3 M398.4 126V88.3" stroke="#74cc1e" stroke-width="1.2" fill="none"/>
<path d="M399.5 0V126" stroke="#e40000" stroke-width="1.25"/>
<path d="M0.5 126V0.5H433.5V126" stroke="#000" stroke-width="1" fill="none"/>
</svg>
<div class="t" style="left:175.4px;top:227.1px;font-size:10.67px;line-height:16px;color:#000;transform-origin:0 50%;transform:scaleX(0.9550);">100</div>
<div class="tick" style="left:192px;top:235px"></div>
<div class="t" style="left:175.4px;top:209.2px;font-size:10.67px;line-height:16px;color:#000;transform-origin:0 50%;transform:scaleX(0.9550);">200</div>
<div class="tick" style="left:192px;top:218px"></div>
<div class="t" style="left:175.4px;top:191.2px;font-size:10.67px;line-height:16px;color:#000;transform-origin:0 50%;transform:scaleX(0.9550);">300</div>
<div class="tick" style="left:192px;top:200px"></div>
<div class="t" style="left:175.4px;top:173.3px;font-size:10.67px;line-height:16px;color:#000;transform-origin:0 50%;transform:scaleX(0.9550);">400</div>
<div class="tick" style="left:192px;top:182px"></div>
<div class="t" style="left:175.4px;top:155.4px;font-size:10.67px;line-height:16px;color:#000;transform-origin:0 50%;transform:scaleX(0.9550);">500</div>
<div class="tick" style="left:192px;top:164px"></div>
<div class="t" style="left:175.4px;top:137.4px;font-size:10.67px;line-height:16px;color:#000;transform-origin:0 50%;transform:scaleX(0.9550);">600</div>
<div class="tick" style="left:192px;top:146px"></div>
<div class="t" style="left:175.4px;top:119.5px;font-size:10.67px;line-height:16px;color:#000;transform-origin:0 50%;transform:scaleX(0.9550);">700</div>
<div class="tick" style="left:192px;top:128px"></div>
<div class="t" style="left:633.6px;top:229.8px;font-size:10.67px;line-height:16px;color:#000;transform-origin:0 50%;transform:scaleX(0.9550);">1 X</div>
<div class="tick" style="left:630px;top:238px"></div>
<div class="t" style="left:633.6px;top:214.1px;font-size:10.67px;line-height:16px;color:#000;transform-origin:0 50%;transform:scaleX(0.9550);">2 X</div>
<div class="tick" style="left:630px;top:222px"></div>
<div class="t" style="left:633.6px;top:198.4px;font-size:10.67px;line-height:16px;color:#000;transform-origin:0 50%;transform:scaleX(0.9550);">3 X</div>
<div class="tick" style="left:630px;top:206px"></div>
<div class="t" style="left:633.6px;top:182.7px;font-size:10.67px;line-height:16px;color:#000;transform-origin:0 50%;transform:scaleX(0.9550);">4 X</div>
<div class="tick" style="left:630px;top:190px"></div>
<div class="t" style="left:633.6px;top:167.0px;font-size:10.67px;line-height:16px;color:#000;transform-origin:0 50%;transform:scaleX(0.9550);">5 X</div>
<div class="tick" style="left:630px;top:175px"></div>
<div class="t" style="left:633.6px;top:151.3px;font-size:10.67px;line-height:16px;color:#000;transform-origin:0 50%;transform:scaleX(0.9550);">6 X</div>
<div class="tick" style="left:630px;top:159px"></div>
<div class="t" style="left:633.6px;top:135.6px;font-size:10.67px;line-height:16px;color:#000;transform-origin:0 50%;transform:scaleX(0.9550);">7 X</div>
<div class="tick" style="left:630px;top:143px"></div>
<div class="t" style="left:633.6px;top:119.9px;font-size:10.67px;line-height:16px;color:#000;transform-origin:0 50%;transform:scaleX(0.9550);">8 X</div>
<div class="tick" style="left:630px;top:128px"></div>
<div class="t" style="left:189.7px;top:252.3px;font-size:10.67px;line-height:16px;color:#000;transform-origin:0 50%;transform:scaleX(0.9550);">0.0</div>
<div class="t" style="left:233.0px;top:252.3px;font-size:10.67px;line-height:16px;color:#000;transform-origin:0 50%;transform:scaleX(0.9550);">2.5</div>
<div class="t" style="left:276.2px;top:252.3px;font-size:10.67px;line-height:16px;color:#000;transform-origin:0 50%;transform:scaleX(0.9550);">5.0</div>
<div class="t" style="left:319.5px;top:252.3px;font-size:10.67px;line-height:16px;color:#000;transform-origin:0 50%;transform:scaleX(0.9550);">7.5</div>
<div class="t" style="left:359.9px;top:252.3px;font-size:10.67px;line-height:16px;color:#000;transform-origin:0 50%;transform:scaleX(0.9550);">10.0</div>
<div class="t" style="left:403.1px;top:252.3px;font-size:10.67px;line-height:16px;color:#000;transform-origin:0 50%;transform:scaleX(0.9550);">12.5</div>
<div class="t" style="left:446.4px;top:252.3px;font-size:10.67px;line-height:16px;color:#000;transform-origin:0 50%;transform:scaleX(0.9550);">15.0</div>
<div class="t" style="left:489.6px;top:252.3px;font-size:10.67px;line-height:16px;color:#000;transform-origin:0 50%;transform:scaleX(0.9550);">17.5</div>
<div class="t" style="left:532.9px;top:252.3px;font-size:10.67px;line-height:16px;color:#000;transform-origin:0 50%;transform:scaleX(0.9550);">20.0</div>
<div class="t" style="left:576.1px;top:252.3px;font-size:10.67px;line-height:16px;color:#000;transform-origin:0 50%;transform:scaleX(0.9550);">22.5</div>
<div class="t" style="left:608.8px;top:252.3px;font-size:10.67px;line-height:16px;color:#000;transform-origin:0 50%;transform:scaleX(0.9550);">25.0 GB</div>
<div class="t" style="left:189.7px;top:408.3px;font-size:10.67px;line-height:16px;color:#000;transform-origin:0 50%;transform:scaleX(0.9550);">0.0</div>
<div class="t" style="left:233.0px;top:408.3px;font-size:10.67px;line-height:16px;color:#000;transform-origin:0 50%;transform:scaleX(0.9550);">2.5</div>
<div class="t" style="left:276.2px;top:408.3px;font-size:10.67px;line-height:16px;color:#000;transform-origin:0 50%;transform:scaleX(0.9550);">5.0</div>
<div class="t" style="left:319.5px;top:408.3px;font-size:10.67px;line-height:16px;color:#000;transform-origin:0 50%;transform:scaleX(0.9550);">7.5</div>
<div class="t" style="left:359.9px;top:408.3px;font-size:10.67px;line-height:16px;color:#000;transform-origin:0 50%;transform:scaleX(0.9550);">10.0</div>
<div class="t" style="left:403.1px;top:408.3px;font-size:10.67px;line-height:16px;color:#000;transform-origin:0 50%;transform:scaleX(0.9550);">12.5</div>
<div class="t" style="left:446.4px;top:408.3px;font-size:10.67px;line-height:16px;color:#000;transform-origin:0 50%;transform:scaleX(0.9550);">15.0</div>
<div class="t" style="left:489.6px;top:408.3px;font-size:10.67px;line-height:16px;color:#000;transform-origin:0 50%;transform:scaleX(0.9550);">17.5</div>
<div class="t" style="left:532.9px;top:408.3px;font-size:10.67px;line-height:16px;color:#000;transform-origin:0 50%;transform:scaleX(0.9550);">20.0</div>
<div class="t" style="left:576.1px;top:408.3px;font-size:10.67px;line-height:16px;color:#000;transform-origin:0 50%;transform:scaleX(0.9550);">22.5</div>
<div class="t" style="left:608.8px;top:408.3px;font-size:10.67px;line-height:16px;color:#000;transform-origin:0 50%;transform:scaleX(0.9550);">25.0 GB</div>
<div class="t" style="left:186.7px;top:370.4px;font-size:10.67px;line-height:16px;color:#000;transform-origin:0 50%;transform:scaleX(0.9550);">5</div>
<div class="tick" style="left:192px;top:378px"></div>
<div class="t" style="left:181.1px;top:339.0px;font-size:10.67px;line-height:16px;color:#000;transform-origin:0 50%;transform:scaleX(0.9550);">10</div>
<div class="tick" style="left:192px;top:346px"></div>
<div class="t" style="left:181.1px;top:307.6px;font-size:10.67px;line-height:16px;color:#000;transform-origin:0 50%;transform:scaleX(0.9550);">15</div>
<div class="tick" style="left:192px;top:315px"></div>
<div class="t" style="left:181.1px;top:276.2px;font-size:10.67px;line-height:16px;color:#000;transform-origin:0 50%;transform:scaleX(0.9550);">20</div>
<div class="tick" style="left:192px;top:284px"></div>
<div class="t" style="left:634.0px;top:376.4px;font-size:10.67px;line-height:16px;color:#000;transform-origin:0 50%;transform:scaleX(0.9550);">2%</div>
<div class="t" style="left:634.0px;top:351.4px;font-size:10.67px;line-height:16px;color:#000;transform-origin:0 50%;transform:scaleX(0.9550);">4%</div>
<div class="t" style="left:634.0px;top:326.4px;font-size:10.67px;line-height:16px;color:#000;transform-origin:0 50%;transform:scaleX(0.9550);">6%</div>
<div class="t" style="left:634.0px;top:301.4px;font-size:10.67px;line-height:16px;color:#000;transform-origin:0 50%;transform:scaleX(0.9550);">8%</div>
<div class="t" style="left:634.0px;top:276.4px;font-size:10.67px;line-height:16px;color:#000;transform-origin:0 50%;transform:scaleX(0.9550);">10%</div>
<div class="t" style="left:260.0px;top:428.3px;font-size:12px;line-height:16px;color:#000;transform-origin:0 50%;transform:scaleX(0.7792);">LDC</div>
<div class="t" style="left:317.9px;top:428.3px;font-size:12px;line-height:16px;color:#000;transform-origin:0 50%;transform:scaleX(0.7712);">BIS</div>
<div class="t" style="left:170.1px;top:445.1px;font-size:12px;line-height:16px;color:#000;transform-origin:0 50%;transform:scaleX(0.8967);">Avg</div>
<div class="t" style="left:170.1px;top:461.1px;font-size:12px;line-height:16px;color:#000;transform-origin:0 50%;transform:scaleX(0.9303);">Max</div>
<div class="t" style="left:168.0px;top:477.1px;font-size:12px;line-height:16px;color:#000;transform-origin:0 50%;transform:scaleX(0.9676);">Total</div>
<div class="t" style="left:259.5px;top:445.1px;font-size:12px;line-height:16px;color:#1c8a1c;transform-origin:0 50%;transform:scaleX(0.8761);">3.09</div>
<div class="t" style="left:262.7px;top:461.1px;font-size:12px;line-height:16px;color:#1c8a1c;transform-origin:0 50%;transform:scaleX(0.8633);">605</div>
<div class="t" style="left:237.9px;top:477.1px;font-size:12px;line-height:16px;color:#1c8a1c;transform-origin:0 50%;transform:scaleX(0.8901);">1166273</div>
<div class="t" style="left:313.3px;top:445.1px;font-size:12px;line-height:16px;color:#1c8a1c;transform-origin:0 50%;transform:scaleX(0.8803);">0.06</div>
<div class="t" style="left:324.5px;top:461.1px;font-size:12px;line-height:16px;color:#1c8a1c;transform-origin:0 50%;transform:scaleX(0.7057);">12</div>
<div class="t" style="left:304.0px;top:477.1px;font-size:12px;line-height:16px;color:#1c8a1c;transform-origin:0 50%;transform:scaleX(0.8963);">22854</div>
<div style="left:402px;top:430px;width:13px;height:13px;background:#fff;border:1px solid #2a2a2a;"></div>
<svg class="abs" style="left:404px;top:432px" width="9" height="9" viewBox="0 0 9 9"><path d="M1 4.6l2.4 2.7L8 1.3" stroke="#000" stroke-width="2" fill="none"/></svg>
<div class="t" style="left:423.5px;top:429.0px;font-size:12px;line-height:16px;color:#000;transform-origin:0 50%;transform:scaleX(0.9754);">Jitter</div>
<div class="t" style="left:421.5px;top:445.1px;font-size:12px;line-height:16px;color:#1c8a1c;transform-origin:0 50%;transform:scaleX(0.8748);">-0.1%</div>
<div class="t" style="left:425.4px;top:461.1px;font-size:12px;line-height:16px;color:#1c8a1c;transform-origin:0 50%;transform:scaleX(0.8589);">0.0%</div>
<div class="t" style="left:468.8px;top:433.0px;font-size:12px;line-height:16px;color:#000;transform-origin:0 50%;transform:scaleX(0.8910);">Speed</div>
<div class="t" style="left:527.3px;top:433.0px;font-size:12px;line-height:16px;color:#1c8a1c;transform-origin:0 50%;transform:scaleX(0.8564);">2.01 X</div>
<div class="t" style="left:468.8px;top:461.1px;font-size:12px;line-height:16px;color:#000;transform-origin:0 50%;transform:scaleX(0.9434);">Position</div>
<div class="t" style="left:527.3px;top:461.1px;font-size:12px;line-height:16px;color:#1c8a1c;transform-origin:0 50%;transform:scaleX(0.9010);">23593 MB</div>
<div class="t" style="left:468.8px;top:477.1px;font-size:12px;line-height:16px;color:#000;transform-origin:0 50%;transform:scaleX(0.8633);">Samples</div>
<div class="t" style="left:527.3px;top:477.1px;font-size:12px;line-height:16px;color:#1c8a1c;transform-origin:0 50%;transform:scaleX(0.8882);">377350</div>
<div class="btn" style="left:582px;top:428px;width:75px;height:21px;"></div>
<div class="t" style="left:586.0px;top:430.7px;font-size:12px;line-height:16px;color:#000;transform-origin:0 50%;transform:scaleX(0.8476);">2.0 X</div>
<svg class="abs" style="left:643.3px;top:435.4px" width="10" height="7" viewBox="0 0 9.4 7"><path d="M1 1.2l3.7 3.9 3.7-3.9" stroke="#404040" stroke-width="1.9" fill="none"/></svg>
<div class="btn" style="left:583px;top:452px;width:73px;height:21px;"></div>
<div class="t" style="left:597.0px;top:455.0px;font-size:12px;line-height:16px;color:#000;transform-origin:0 50%;transform:scaleX(0.9877);">Start full</div>
<div class="btn" style="left:582px;top:479px;width:73px;height:21px;"></div>
<div class="t" style="left:594.5px;top:481.6px;font-size:12px;line-height:16px;color:#000;transform-origin:0 50%;transform:scaleX(0.9550);">Start part</div>
<div style="left:8px;top:505px;width:659px;height:18px;background:#f0f0f0;"></div>
<div style="left:148px;top:507px;width:1px;height:15px;background:#d2d2d2;"></div>
<div style="left:153px;top:509px;width:302px;height:11px;background:#06b025;border:1px solid #bcbcbc;"></div>
<div style="left:514px;top:507px;width:1px;height:15px;background:#d2d2d2;"></div>
<div style="left:637px;top:507px;width:1px;height:15px;background:#d2d2d2;"></div>
<svg class="abs" style="left:655px;top:511px" width="12" height="12" viewBox="0 0 12 12"><g fill="#b8b8b8"><rect x="8" y="2" width="2" height="2"/><rect x="5" y="5" width="2" height="2"/><rect x="8" y="5" width="2" height="2"/><rect x="2" y="8" width="2" height="2"/><rect x="5" y="8" width="2" height="2"/><rect x="8" y="8" width="2" height="2"/></g></svg>
<div class="t" style="left:10.7px;top:506.8px;font-size:12px;line-height:16px;color:#000;transform-origin:0 50%;transform:scaleX(0.8816);">Test completed</div>
<div class="t" style="left:461.6px;top:506.8px;font-size:12px;line-height:16px;color:#000;transform-origin:0 50%;transform:scaleX(0.8456);">100.0%</div>
<div class="t" style="left:609.0px;top:506.8px;font-size:12px;line-height:16px;color:#000;transform-origin:0 50%;transform:scaleX(0.9067);">46:05</div>
</body></html>
